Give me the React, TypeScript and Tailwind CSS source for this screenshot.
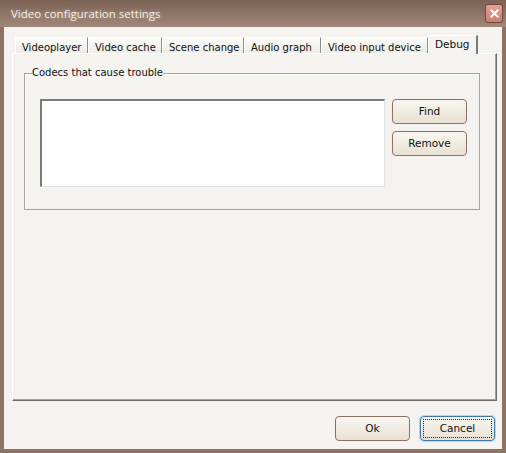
import { X } from "lucide-react";

const tabs = [
  { label: "Videoplayer", w: "w-[73px]" },
  { label: "Video cache", w: "w-[74px]" },
  { label: "Scene change", w: "w-[82px]" },
  { label: "Audio graph", w: "w-[77px]" },
  { label: "Video input device", w: "w-[107px]" },
];

function WinButton({ children, isDefault = false }: { children: string; isDefault?: boolean }) {
  if (isDefault) {
    return (
      <button className="w-[75px] h-[25px] rounded-[4px] border border-[#3d7aa8] shadow-[0_0_0_1px_#a9dcf3] bg-gradient-to-b from-[#f8f6f0] to-[#e8e1d2] p-[2px] text-[10.5px] text-[#111]">
        <span className="flex h-full w-full items-center justify-center border border-dotted border-[#222]">{children}</span>
      </button>
    );
  }
  return (
    <button className="w-[75px] h-[25px] rounded-[4px] border border-[#8a7263] bg-gradient-to-b from-[#f8f6f0] to-[#e8e1d2] text-[10.5px] text-[#111]">
      {children}
    </button>
  );
}

export default function App() {
  return (
    <div className="w-[506px] h-[453px] bg-[#8e7365] flex flex-col font-['DejaVu_Sans',sans-serif]">
      <div className="h-[27px] shrink-0 flex items-center justify-between pl-[11px] pr-[3px] bg-gradient-to-b from-[#7c6254] to-[#a08779]">
        <span className="text-[11.5px] text-[#f4efe9] font-['Open_Sans',sans-serif] [text-shadow:0_0_4px_rgba(255,255,255,0.35)]">
          Video configuration settings
        </span>
        <div className="w-[18px] h-[19px] rounded-[3px] border border-[#6b4a40] bg-gradient-to-b from-[#e6a193] to-[#cf7d6e] flex items-center justify-center">
          <X className="w-[13px] h-[13px] text-white" strokeWidth={3.5} />
        </div>
      </div>

      <div className="flex-1 mx-[4px] mb-[4px] bg-[#f4f3ef] flex flex-col pt-[8px] pl-[8px] pr-[5px]">
        <div className="h-[18px] flex items-end pl-[3px]">
          {tabs.map((t) => (
            <div
              key={t.label}
              className={`${t.w} h-[16px] overflow-hidden border-t border-l border-white border-r border-r-[#8c8c8c] bg-gradient-to-b from-[#fbfbf9] to-[#ecebe5] pl-[6px] pt-[2px] text-[10px] leading-[15px] text-[#111] whitespace-nowrap`}
            >
              {t.label}
            </div>
          ))}
          <div className="w-[50px] h-[19px] -mb-[1px] relative z-10 border-t border-l border-white border-r-2 border-r-[#7a7a7a] bg-[#f4f3ef] pl-[6px] pt-[1px] text-[10.5px] leading-[15px] text-[#111]">
            Debug
          </div>
        </div>

        <div className="h-[348px] border-t border-l border-white border-r border-b border-r-[#6a6a6a] border-b-[#6a6a6a] shadow-[inset_-1px_-1px_0_#a0a0a0] pt-[19px] pl-[11px] pr-[16px]">
          <div className="relative h-[137px] border border-[#a3a3a3] shadow-[inset_1px_1px_0_#fff] pt-[25px] pl-[15px] flex gap-[7px]">
            <span className="absolute -top-[8px] left-[7px] bg-[#f4f3ef] text-[10px] leading-[14px] text-[#111]">
              Codecs that cause trouble
            </span>
            <div className="w-[345px] h-[88px] bg-white border-t-2 border-l-2 border-[#7c7c7c] border-b border-r border-b-[#e3e3e3] border-r-[#e3e3e3]" />
            <div className="flex flex-col gap-[7px]">
              <WinButton>Find</WinButton>
              <WinButton>Remove</WinButton>
            </div>
          </div>
        </div>

        <div className="flex justify-end gap-[10px] pt-[15px] pr-[2px]">
          <WinButton>Ok</WinButton>
          <WinButton isDefault>Cancel</WinButton>
        </div>
      </div>
    </div>
  );
}
